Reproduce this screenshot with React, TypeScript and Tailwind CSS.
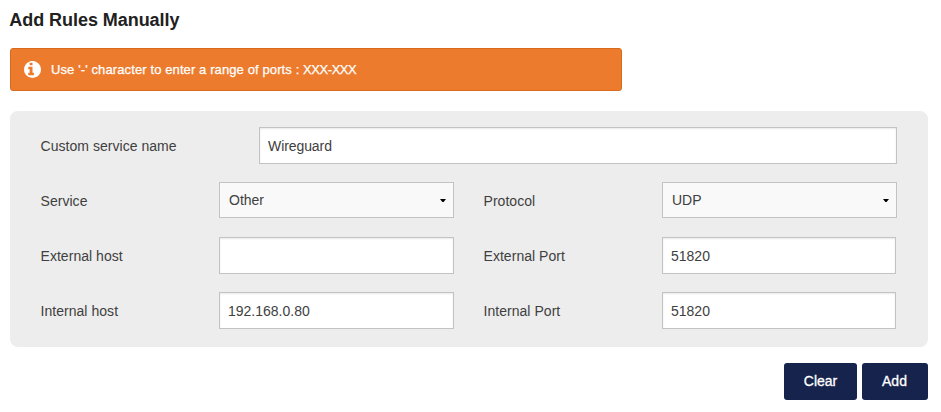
import React from "react";

const inputClass =
  "h-[37px] border border-[#c3c3c3] bg-white pr-2 pl-[8px] text-[14px] text-[#404040] outline-none rounded-none shadow-[inset_0_1px_2px_rgba(0,0,0,0.09)]";

function Label({ children }: { children: React.ReactNode }) {
  return <label className="shrink-0 pt-px pl-[0.5px] text-[14px] leading-5 tracking-[0.04px]">{children}</label>;
}

function Select({ value }: { value: string }) {
  return (
    <button className="mb-px flex h-[36px] w-[235px] items-center justify-between border border-[#c3c3c3] bg-[#f9f9f9] pr-[7px] pl-[9px] text-[14px] leading-5">
      <span>{value}</span>
      <svg width="6" height="3" viewBox="0 0 6 3" className="mt-px">
        <path d="M0 0H6L3.6 3H2.4Z" fill="#000" />
      </svg>
    </button>
  );
}

function InfoIcon() {
  return (
    <svg className="size-[17px] shrink-0" viewBox="128 128 1536 1536" fill="currentColor">
      <path d="M1024 1376v-160q0-14-9-23t-23-9h-96v-512q0-14-9-23t-23-9h-320q-14 0-23 9t-9 23v160q0 14 9 23t23 9h96v320h-96q-14 0-23 9t-9 23v160q0 14 9 23t23 9h448q14 0 23-9t9-23zM896 480v-160q0-14-9-23t-23-9h-192q-14 0-23 9t-9 23v160q0 14 9 23t23 9h192q14 0 23-9t9-23zM1664 896q0 209-103 385.5t-279.5 279.5-385.5 103-385.5-103-279.5-279.5-103-385.5 103-385.5 279.5-279.5 385.5-103 385.5 103 279.5 279.5 103 385.5z" transform="translate(0 0)" />
    </svg>
  );
}

export default function App() {
  return (
    <main className="h-[412px] w-[941px] bg-white pr-[13px] pl-[10px] font-['Liberation_Sans',Arial,sans-serif] text-[#404040]">
      <h1 className="-ml-[0.7px] h-[48px] pt-2 text-[18px] leading-6 font-bold tracking-[-0.05px] text-[#212121]">
        Add Rules Manually
      </h1>

      <div className="flex h-[43px] w-[612px] items-center rounded-[3px] border border-[#d96a1a] bg-[#ed7b2d] pl-[13px] text-white">
        <InfoIcon />
        <span className="ml-[10px] text-[13px] leading-5 tracking-[0.11px] [-webkit-text-stroke:0.25px_white]">
          Use '-' character to enter a range of ports : <span className="tracking-[-0.45px]">XXX-XXX</span>
        </span>
      </div>

      <section className="mt-5 h-[236px] rounded-[8px] bg-[#ededed] pt-4 pr-[31px] pl-[30px]">
        <div className="flex h-[37px] items-center justify-between">
          <Label>Custom service name</Label>
          <input className={`${inputClass} w-[638px] tracking-[-0.08px]`} defaultValue="Wireguard" />
        </div>
        <div className="mt-[18px] grid grid-cols-[179px_264px_179px_235px] items-center gap-y-[18px] [&>*]:justify-self-start">
          <Label>Service</Label>
          <Select value="Other" />
          <Label>Protocol</Label>
          <Select value="UDP" />
          <Label>External host</Label>
          <input className={`${inputClass} w-[235px]`} />
          <Label>External Port</Label>
          <input className={`${inputClass} w-[234px]`} defaultValue="51820" />
          <Label>Internal host</Label>
          <input className={`${inputClass} w-[235px]`} defaultValue="192.168.0.80" />
          <Label>Internal Port</Label>
          <input className={`${inputClass} w-[234px]`} defaultValue="51820" />
        </div>
      </section>

      <div className="mt-4 flex justify-end gap-[5px] text-[14px] text-white [-webkit-text-stroke:0.3px_white]">
        <button className="h-[37px] w-[73px] rounded-[3px] bg-[#16234d]">Clear</button>
        <button className="h-[37px] w-[66px] rounded-[3px] bg-[#16234d] pr-px">Add</button>
      </div>
    </main>
  );
}
